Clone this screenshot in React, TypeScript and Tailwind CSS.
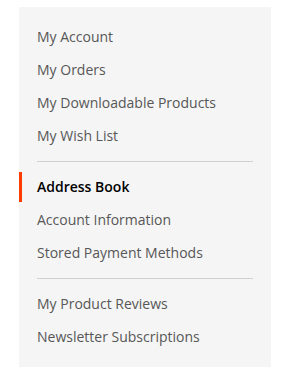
import React from "react";

const group1 = ["My Account", "My Orders", "My Downloadable Products", "My Wish List"];
const group3 = ["My Product Reviews", "Newsletter Subscriptions"];

function Item({ label }: { label: string }) {
  return (
    <li className="mt-[3px]">
      <a
        href="#"
        className="block h-[30px] border-l-[3px] border-transparent pl-[15px] pr-[18px] py-[5px] leading-[20px] text-[#575757]"
      >
        {label}
      </a>
    </li>
  );
}

function Delimiter() {
  return (
    <li className="mt-[3px] py-[7px] px-[18px]">
      <span className="block h-px bg-[#d1d1d1]" />
    </li>
  );
}

export default function App() {
  return (
    <div className="bg-white w-[306px] h-[384px] pl-[19px] pt-[7px]" style={{ fontFamily: '"Open Sans", sans-serif' }}>
      <div className="w-[252px] bg-[#f5f5f5] pt-[12px] pb-[15px] text-[14px]">
        <ul className="list-none m-0 p-0">
          {group1.map((l) => (
            <Item key={l} label={l} />
          ))}
          <Delimiter />
          <li className="mt-[3px]">
            <strong className="block h-[30px] border-l-[3px] border-[#ff3c00] pl-[15px] pr-[18px] py-[5px] leading-[20px] text-black font-semibold">
              Address Book
            </strong>
          </li>
          <Item label="Account Information" />
          <Item label="Stored Payment Methods" />
          <Delimiter />
          {group3.map((l) => (
            <Item key={l} label={l} />
          ))}
        </ul>
      </div>
    </div>
  );
}
